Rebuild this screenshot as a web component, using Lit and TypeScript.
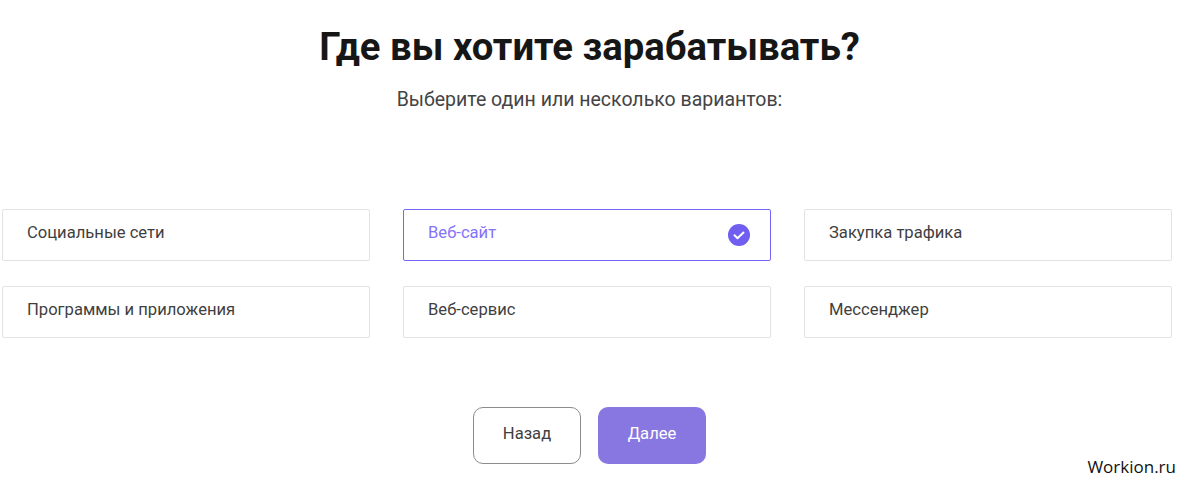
import { LitElement, html, css } from "lit";
import { customElement } from "lit/decorators.js";

const items = [
  "Социальные сети",
  "Веб-сайт",
  "Закупка трафика",
  "Программы и приложения",
  "Веб-сервис",
  "Мессенджер",
];

@customElement("app-root")
export class AppRoot extends LitElement {
  static styles = css`
    :host {
      display: block;
      position: relative;
      width: 1183px;
      height: 482px;
      overflow: hidden;
      background: #fff;
      font-family: Roboto, "Noto Sans", sans-serif;
      color: #3d3d3d;
    }
    .page {
      display: flex;
      flex-direction: column;
      align-items: center;
      padding: 25px 4px 0 0;
    }
    h1 {
      margin: 0;
      font-size: 38.3px;
      line-height: 44px;
      font-weight: 700;
      color: #161616;
    }
    .sub {
      margin: 19px 0 0;
      font-size: 19.5px;
      line-height: 24px;
      color: #444;
    }
    .grid {
      margin: 97px 5px 0 0;
      display: grid;
      grid-template-columns: repeat(3, 368px);
      column-gap: 33px;
      row-gap: 25px;
    }
    .opt {
      box-sizing: border-box;
      height: 52px;
      border: 1px solid #e2e2e2;
      border-radius: 2px;
      padding: 0 20px 0 24px;
      display: flex;
      align-items: center;
      justify-content: space-between;
      font-size: 16.6px;
      color: #3f3f3f;
    }
    .opt span { padding-bottom: 5px; }
    .opt.sel {
      border-color: #7565fb;
      color: #8474fa;
    }
    .actions {
      margin-top: 69px;
      display: flex;
      gap: 17px;
    }
    .btn {
      box-sizing: border-box;
      width: 108px;
      height: 57px;
      border-radius: 10px;
      display: flex;
      align-items: center;
      justify-content: center;
      font-size: 16.6px;
      padding-bottom: 5px;
    }
    .back { border: 1px solid #8c8c8c; color: #3f3f3f; }
    .next { background: #8877e0; color: #fff; }
    .mark {
      position: absolute;
      right: 7px;
      bottom: 4px;
      font-family: "Open Sans", sans-serif;
      font-size: 17px;
      line-height: 22px;
      color: #111;
    }
  `;

  render() {
    return html`<div class="page">
        <h1>Где вы хотите зарабатывать?</h1>
        <p class="sub">Выберите один или несколько вариантов:</p>
        <div class="grid">
          ${items.map((t, i) =>
            i === 1
              ? html`<div class="opt sel">
                  <span>${t}</span>
                  <svg width="22" height="22" viewBox="0 0 22 22">
                    <circle cx="11" cy="11" r="11" fill="#6f5ef0" />
                    <path d="M6.5 11.3l3 2.9 6-5.6" fill="none" stroke="#fff" stroke-width="2" stroke-linecap="round" stroke-linejoin="round" />
                  </svg>
                </div>`
              : html`<div class="opt"><span>${t}</span></div>`
          )}
        </div>
        <div class="actions">
          <div class="btn back">Назад</div>
          <div class="btn next">Далее</div>
        </div>
      </div>
      <div class="mark">Workion.ru</div>`;
  }
}
